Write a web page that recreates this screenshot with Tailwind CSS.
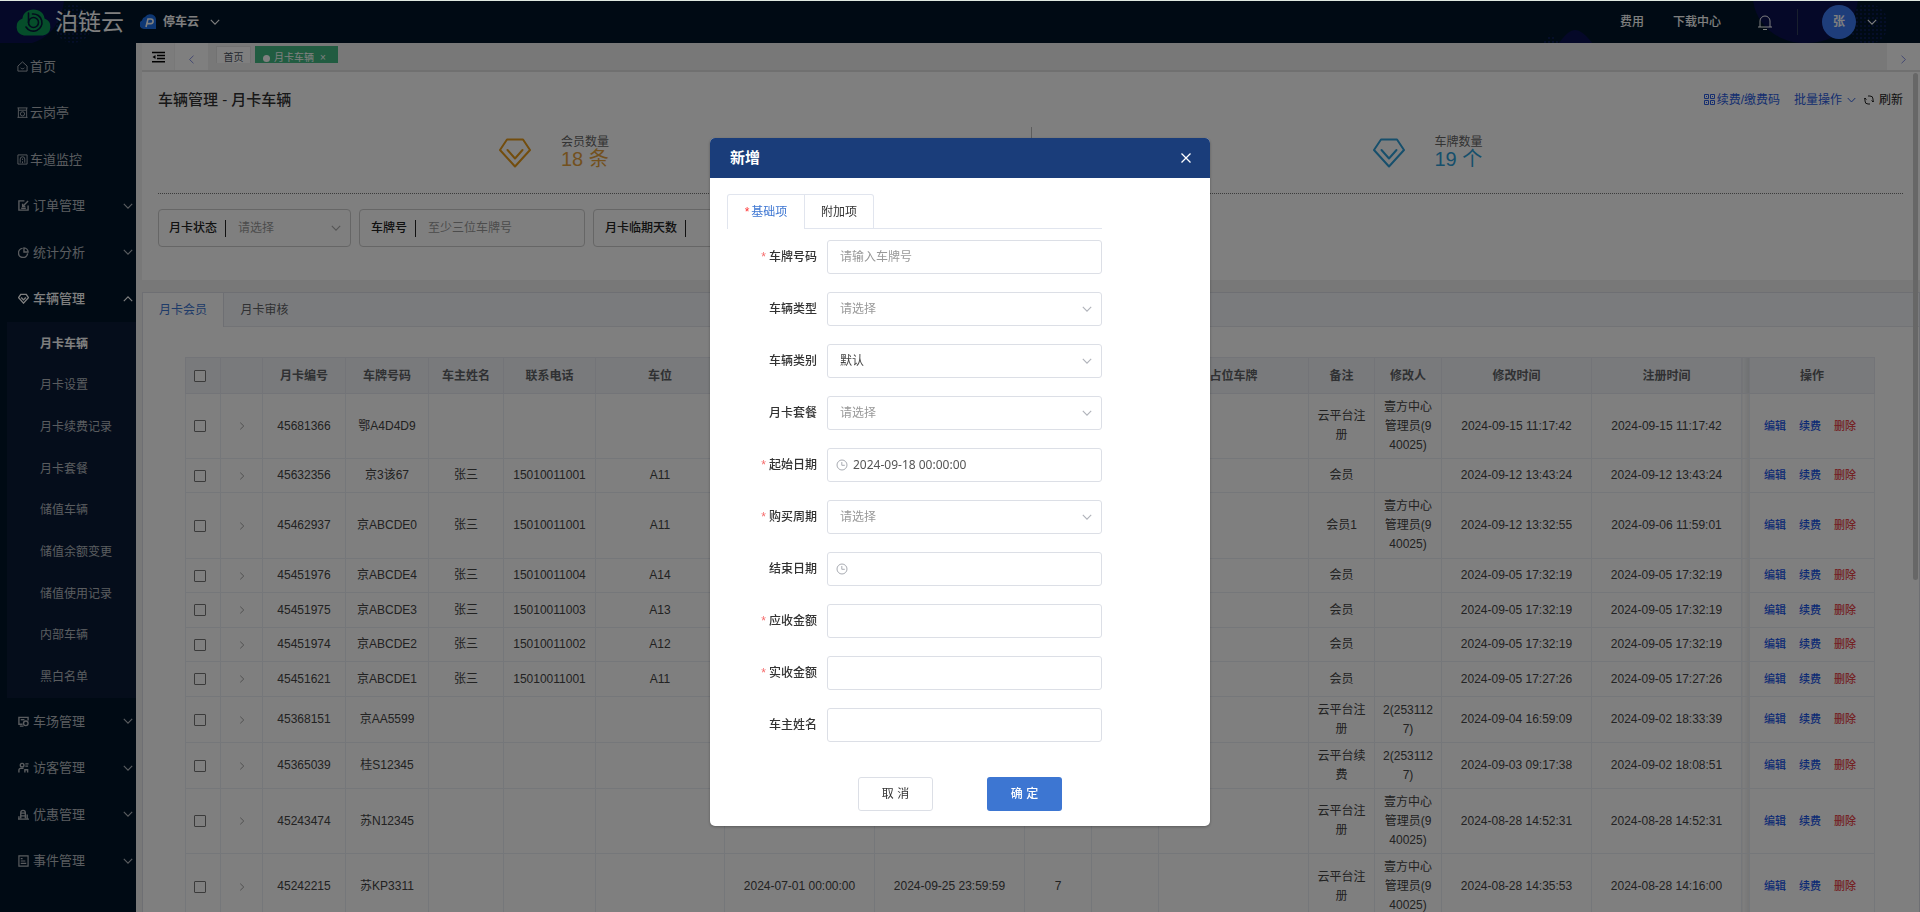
<!DOCTYPE html>
<html lang="zh-CN">
<head>
<meta charset="utf-8">
<title>泊链云 - 月卡车辆</title>
<script src="https://cdn.jsdelivr.net/npm/@tailwindcss/browser@4"></script>
</head>
<body class="bg-[#dfe8e0] font-['Liberation_Sans','Noto_Sans_CJK_SC',sans-serif] text-xs text-[#444]">
<svg class="hidden">
  <symbol id="down" viewBox="0 0 10 10"><path d="M.8 2.800 5 7.200l4.200-4.400" fill="none" stroke="currentColor" stroke-width="1.100"/></symbol>
  <symbol id="up" viewBox="0 0 10 10"><path d="M.8 7.200 5 2.800l4.200 4.400" fill="none" stroke="currentColor" stroke-width="1.100"/></symbol>
  <symbol id="right" viewBox="0 0 10 10"><path d="M2.800.8 7.200 5l-4.400 4.200" fill="none" stroke="currentColor"/></symbol>
  <symbol id="left" viewBox="0 0 10 10"><path d="M7.200.8 2.800 5l4.400 4.200" fill="none" stroke="currentColor"/></symbol>
  <symbol id="clock" viewBox="0 0 12 12"><g fill="none" stroke="currentColor"><circle cx="6" cy="6" r="5"/><path d="M5.800 3v3.300h3"/></g></symbol>
  <symbol id="diamond" viewBox="0 0 32 30"><g fill="none" stroke="currentColor" stroke-width="2" stroke-linejoin="round" stroke-linecap="round"><path d="M8 1.500h16L31 12 16 28.500 1 12z"/><path d="M8.500 12 16 20.500 23.500 12"/></g></symbol>
</svg>

<div class="flex h-screen flex-col overflow-hidden pt-px">
  <header class="relative flex h-[42px] shrink-0 items-center overflow-hidden bg-[#001529] text-white">
    <svg class="absolute top-0 left-0 h-[42px] w-[140px]" viewBox="0 0 140 42">
      <defs><pattern id="dots" width="4" height="4" patternUnits="userSpaceOnUse"><rect width="2" height="2" fill="#0a1c50"/></pattern></defs>
      <path d="M0 0h64C62 18 52 36 32 42H0z" fill="#0a1050"/><circle cx="73" cy="23" r="19" fill="url(#dots)"/>
    </svg>
    <svg class="absolute top-0 right-0 h-[42px] w-[400px]" viewBox="0 0 400 42">
      <path d="M233-1c3 25 24 43 53 43s49-18 52-43z" fill="#0a1050"/><path d="M38 43c8-10 12-14 17-14s10 4 18 14z" fill="#0a1050"/>
      <path d="M22 43l9-11 9 11z" fill="url(#dots)"/><circle cx="348" cy="23" r="20" fill="url(#dots)"/>
    </svg>
    <a href="#" class="relative ml-[15px] flex items-center gap-[3px]">
      <svg class="h-[27px] w-[37px]" viewBox="0 0 37 27">
        <path d="M9 26.500A8.800 8.800 0 0 1 7.500 9.500C8 4 12.500.5 18.500.5S29 4 29.500 9.500A8.800 8.800 0 0 1 28 26.500z" fill="#0a9a55"/>
        <g fill="none" stroke="#06173a" stroke-width="1.600" stroke-linecap="round"><path d="M13.500 4v9.500"/><circle cx="18.500" cy="13.500" r="5"/><path d="M17.500 5a8.600 8.600 0 1 1-6.500 13"/></g>
      </svg>
      <span class="text-[23px] leading-8">泊链云</span>
    </a>
    <button class="relative ml-4 flex items-center gap-[7px] font-bold">
      <svg class="h-4 w-4" viewBox="0 0 16 16"><path d="M5 3a6 6 0 0 1 11 4v8H4A4.500 4.500 0 0 1 2 6.500C2.500 4.500 3.500 3.300 5 3z" fill="#1a6fe8"/><path d="M6 13 8 5h2.800a2.200 2.200 0 0 1 0 4.600H7.500" fill="none" stroke="#fff" stroke-width="1.600"/></svg>
      停车云
      <svg class="ml-1 h-[10px] w-[10px]"><use href="#down"/></svg>
    </button>
    <nav class="relative ml-auto flex items-center">
      <a href="#" class="font-medium">费用</a>
      <a href="#" class="ml-[29px] font-medium">下载中心</a>
      <button aria-label="通知" class="ml-[36px]"><svg class="h-4 w-4" viewBox="0 0 16 16" fill="none" stroke="#fff"><path d="M1 13h14M3 13V7a5 5 0 0 1 10 0v6M6 15.500h4"/></svg></button>
      <span class="ml-[24px] h-[26px] w-px bg-[#33415c]"></span>
      <span class="ml-[24px] flex h-[34px] w-[34px] items-center justify-center rounded-full bg-[#3d7bf5] font-bold">张</span>
      <button aria-label="账户" class="mr-[43px] ml-[11px]"><svg class="h-[10px] w-[10px]"><use href="#down"/></svg></button>
    </nav>
  </header>

  <div class="flex min-h-0 flex-1">
    <aside class="w-[136px] shrink-0 overflow-hidden bg-[#001529] text-[13px] text-[#b4b9bf]">
      <nav class="grid h-[279px] auto-rows-fr">
        <a href="#" class="flex items-center gap-[2px] pl-[17px]"><svg class="h-[11px] w-[11px]" viewBox="0 0 12 12" fill="none" stroke="currentColor"><path d="M1 5.500 6 1l5 4.500V11H1zM4 7.500c1 1.300 3 1.300 4 0"/></svg>首页</a>
        <a href="#" class="flex items-center gap-[2px] pl-[17px]"><svg class="h-[11px] w-[11px]" viewBox="0 0 12 12" fill="none" stroke="currentColor"><path d="M.5 1h11M1.500 1v10.500M10.500 1v10.500M.5 11.300h11M2 3.500h8"/><circle cx="6" cy="7.500" r="2.300"/></svg>云岗亭</a>
        <a href="#" class="flex items-center gap-[2px] pl-[17px]"><svg class="h-[11px] w-[11px]" viewBox="0 0 12 12" fill="none" stroke="currentColor"><path d="M1 1h10v10H1zM3.500 9.500V5.500a2.500 2.500 0 0 1 5 0v4M6 5v1.500M6 8v2"/></svg>车道监控</a>
        <a href="#" class="flex items-center gap-1 pr-[3px] pl-[18px]"><svg class="h-[11px] w-[11px]" viewBox="0 0 12 12" fill="none" stroke="currentColor" stroke-width="1.500"><path d="M7 1H1v10h10V6M5 7l6-6M3.500 9h5M5 4v3h3"/></svg>订单管理<svg class="ml-auto h-[10px] w-[10px]"><use href="#down"/></svg></a>
        <a href="#" class="flex items-center gap-1 pr-[3px] pl-[18px]"><svg class="h-[11px] w-[11px]" viewBox="0 0 12 12" fill="none" stroke="currentColor" stroke-width="1.500"><path d="M5 1.500A5 5 0 1 0 10.500 7M6.500 1v4.500H11A4.600 4.600 0 0 0 6.500 1z"/></svg>统计分析<svg class="ml-auto h-[10px] w-[10px]"><use href="#down"/></svg></a>
        <a href="#" class="flex items-center gap-1 pr-[3px] pl-[18px] font-medium text-white"><svg class="h-[11px] w-[11px]" viewBox="0 0 12 12" fill="none" stroke="currentColor" stroke-width="1.500"><path d="M3 1.500h6L11.300 5 6 11 .7 5zM3.500 5 6 7.500 8.500 5"/></svg>车辆管理<svg class="ml-auto h-[10px] w-[10px]"><use href="#up"/></svg></a>
      </nav>
      <nav class="ml-[7px] grid h-[376px] auto-rows-fr items-center bg-[#0a1a36] pt-px pl-[33px] text-xs">
        <a href="#" class="font-bold text-white">月卡车辆</a><a href="#">月卡设置</a><a href="#">月卡续费记录</a><a href="#">月卡套餐</a><a href="#">储值车辆</a><a href="#">储值余额变更</a><a href="#">储值使用记录</a><a href="#">内部车辆</a><a href="#">黑白名单</a>
      </nav>
      <nav class="grid h-[186px] auto-rows-fr">
        <a href="#" class="flex items-center gap-1 pr-[3px] pl-[18px]"><svg class="h-[11px] w-[11px]" viewBox="0 0 12 12" fill="none" stroke="currentColor" stroke-width="1.500"><path d="M5 9H1V1.500h10V5M2 11h4"/><circle cx="8.500" cy="8" r="2.500"/><path d="M3 4h4"/></svg>车场管理<svg class="ml-auto h-[10px] w-[10px]"><use href="#down"/></svg></a>
        <a href="#" class="flex items-center gap-1 pr-[3px] pl-[18px]"><svg class="h-[11px] w-[11px]" viewBox="0 0 12 12" fill="none" stroke="currentColor" stroke-width="1.500"><circle cx="4.500" cy="3.500" r="2"/><path d="M1 11.500V9a2 2 0 0 1 2-2h3M8 2h3.500M8 4.500h3M7.500 11.500V8.500h3v3"/></svg>访客管理<svg class="ml-auto h-[10px] w-[10px]"><use href="#down"/></svg></a>
        <a href="#" class="flex items-center gap-1 pr-[3px] pl-[18px]"><svg class="h-[11px] w-[11px]" viewBox="0 0 12 12" fill="none" stroke="currentColor" stroke-width="1.500"><path d="M3 10V4a2.500 2.500 0 0 1 5 0v6M0 11h12M3 4.500h5M3 7.500h5M10 6v5M1 8v3"/></svg>优惠管理<svg class="ml-auto h-[10px] w-[10px]"><use href="#down"/></svg></a>
        <a href="#" class="flex items-center gap-1 pr-[3px] pl-[18px]"><svg class="h-3 w-[11px]" viewBox="0 0 12 13" fill="none" stroke="currentColor" stroke-width="1.300"><path d="M1 1h10v11H1zM3 4h2M3 6.500h5M3 9h6"/></svg>事件管理<svg class="ml-auto h-[10px] w-[10px]"><use href="#down"/></svg></a>
      </nav>
    </aside>

    <main class="relative flex min-w-0 flex-1 flex-col overflow-hidden bg-[#f0f0f0] pl-[6px]">
      <div class="flex h-[29px] shrink-0 items-stretch border-b-2 border-[#e0e0e0]">
        <button aria-label="折叠菜单" class="flex w-8 items-center justify-center bg-[#f8f8f8]"><svg class="h-3 w-[13px]" viewBox="0 0 13 12" fill="none" stroke="#000" stroke-width="1.600"><path d="M0 1.500h13M5 4.500h8M5 7.500h8M0 10.800h13"/><path d="M3.500 4v4L.5 6z" fill="#000" stroke="none"/></svg></button>
        <button aria-label="向左" class="ml-px flex w-[33px] items-center justify-center bg-white pt-[6px] text-[#7a86e0]"><svg class="h-[9px] w-[9px]"><use href="#left"/></svg></button>
        <div class="ml-2 flex h-5 items-start gap-1 overflow-hidden pt-[3px] text-[10px]">
          <a href="#" class="flex h-6 w-[35px] shrink-0 items-center justify-center border border-[#e4e4e4] bg-white text-[#495060]">首页</a>
          <a href="#" class="flex h-6 w-[83px] shrink-0 items-center bg-[#42b983] pl-2 text-white"><span class="mr-1 h-[7px] w-[7px] rounded-full bg-white"></span>月卡车辆<span class="ml-[6px]">×</span></a>
        </div>
        <button aria-label="向右" class="ml-auto flex w-[33px] items-center justify-center bg-white pt-[6px] text-[#7a86e0]"><svg class="h-[9px] w-[9px]"><use href="#right"/></svg></button>
      </div>

      <section class="shrink-0 bg-white pr-[17px] pb-[33px] pl-4">
        <div class="flex h-[55px] items-center">
          <h1 class="text-[15px] font-medium text-[#303030]">车辆管理 - 月卡车辆</h1>
          <a href="#" class="ml-auto flex items-center gap-[2px] text-[#2a5ce0]"><svg class="h-[11px] w-[11px]" viewBox="0 0 11 11" fill="none" stroke="currentColor"><path d="M.5.500h4v4h-4zM6.500.5h4v4h-4zM.5 6.500h4v4h-4zM6.500 6.500h4v4h-4zM2 2.500h1M8 2.500h1M2 8.500h1M8 8.500h1"/></svg>续费/缴费码</a>
          <button class="ml-[14px] flex items-center gap-[5px] text-[#2a5ce0]">批量操作<svg class="h-[10px] w-[9px]"><use href="#down"/></svg></button>
          <button class="ml-2 flex items-center gap-[5px] text-[#222]"><svg class="h-[10px] w-[10px]" viewBox="0 0 10 10" fill="none" stroke="currentColor"><path d="M1 3.500V6a3 3 0 0 0 3 3h2M9 6.500V4a3 3 0 0 0-3-3H4M0 4.500 1 3l1.500 1.500M7.500 5.500 9 7l1-1.500"/></svg>刷新</button>
        </div>
        <div class="grid h-[67px] grid-cols-2 border-b border-dotted border-[#777]">
          <div class="flex items-start gap-[30px] pt-2 pl-[341px]">
            <svg class="mt-[3px] h-[30px] w-8 text-[#e69a1a]"><use href="#diamond"/></svg>
            <div><p class="leading-[14px] text-[#666]">会员数量</p><p class="text-xl leading-5 text-[#e6a23c]">18 条</p></div>
          </div>
          <div class="flex items-start gap-[30px] border-l border-[#bbb] pt-2 pl-[341px]">
            <svg class="mt-[3px] h-[30px] w-8 text-[#2e9fd8]"><use href="#diamond"/></svg>
            <div><p class="leading-[14px] text-[#666]">车牌数量</p><p class="text-xl leading-5 text-[#2e9fd8]">19 个</p></div>
          </div>
        </div>
        <div class="mt-[15px] flex gap-2">
          <label class="flex h-[38px] w-[193px] items-center rounded border border-[#ccc] pl-[10px] font-medium text-[#222]">月卡状态<span class="mx-2 h-[17px] w-px bg-[#222]"></span>
            <select class="min-w-0 flex-1 appearance-none bg-transparent pl-1 font-normal text-[#999]"><option>请选择</option></select><svg class="mr-[9px] h-[10px] w-[10px] text-[#aaa]"><use href="#down"/></svg></label>
          <label class="flex h-[38px] w-[226px] items-center rounded border border-[#ccc] pl-[11px] font-medium text-[#222]">车牌号<span class="mx-2 h-[17px] w-px bg-[#222]"></span>
            <input type="text" placeholder="至少三位车牌号" class="min-w-0 flex-1 bg-transparent pl-1 font-normal placeholder:text-[#999]"></label>
          <label class="flex h-[38px] w-[226px] items-center rounded border border-[#ccc] pl-[11px] font-medium text-[#222]">月卡临期天数<span class="mx-2 h-[17px] w-px bg-[#222]"></span>
            <input type="text" class="min-w-0 flex-1 bg-transparent pl-1 font-normal"></label>
        </div>
      </section>

      <section class="mt-3 shrink-0 border border-[#dcdfe6] bg-white">
        <div class="flex h-[34px] bg-[#f5f7fa] text-[#606266]" role="tablist">
          <button role="tab" class="w-[81px] border-r border-[#dcdfe6] bg-white text-[#3d76d2]">月卡会员</button>
          <button role="tab" class="w-[81px] border-b border-[#e4e7ed]">月卡审核</button>
          <span class="flex-1 border-b border-[#e4e7ed]"></span>
        </div>
        <div class="pt-[30px] pr-[44px] pl-[42px]">
          <table class="w-full table-fixed border-collapse text-center">
            <colgroup><col class="w-[35px]"><col class="w-[42px]"><col class="w-[83px]"><col class="w-[83px]"><col class="w-[75px]"><col class="w-[92px]"><col class="w-[129px]"><col class="w-[150px]"><col class="w-[150px]"><col class="w-[67px]"><col class="w-[67px]"><col class="w-[150px]"><col class="w-[66px]"><col class="w-[67px]"><col class="w-[150px]"><col class="w-[150px]"><col class="w-[8px]"><col></colgroup>
            <thead><tr class="h-[36px] bg-[#f2f5f8] text-[#606266] *:border *:border-[#e6e9f0] *:font-semibold">
              <th><input type="checkbox" aria-label="全选" class="ml-2 block h-3 w-3 appearance-none rounded-[1px] border border-[#777] bg-white"></th><th></th><th>月卡编号</th><th>车牌号码</th><th>车主姓名</th><th>联系电话</th><th>车位</th><th>开始时间</th><th>结束时间</th><th>天数</th><th>状态</th><th>占位车牌</th><th>备注</th><th>修改人</th><th>修改时间</th><th>注册时间</th><th class="bg-linear-to-r from-transparent to-black/8"></th><th>操作</th>
            </tr></thead>
            <tbody id="rows"></tbody>
          </table>
        </div>
      </section>
      <div class="absolute top-[30px] right-[2px] h-[507px] w-[5px] rounded-full bg-[#cfcfcf]"></div>
    </main>
  </div>
</div>

<div class="fixed inset-x-0 top-px bottom-0 flex items-start justify-center bg-black/50">
  <form role="dialog" aria-label="新增" class="mt-[137px] w-[500px] overflow-hidden rounded-[5px] bg-white text-[#333] shadow-[0_1px_3px_rgba(0,0,0,0.3)]">
    <div class="flex h-10 items-center justify-between bg-[#1a3d7a] pr-[19px] pl-5 text-white">
      <h2 class="text-[15px] font-bold">新增</h2>
      <button type="button" aria-label="关闭"><svg class="h-[10px] w-[10px]" viewBox="0 0 10 10" stroke="#fff" stroke-width="1.300"><path d="M.5.500l9 9M9.500.5l-9 9"/></svg></button>
    </div>
    <div class="mt-4 mr-[108px] ml-[17px] flex h-[35px]" role="tablist">
      <button type="button" role="tab" class="w-[78px] rounded-tl-[3px] border-t border-r border-l border-[#e1e5ee] text-[#3d76d2]"><span class="mr-[2px] text-[#f33]">*</span>基础项</button>
      <button type="button" role="tab" class="w-[69px] rounded-tr-[3px] border-t border-r border-b border-[#e1e5ee]">附加项</button>
      <span class="flex-1 border-b border-[#e1e5ee]"></span>
    </div>
    <div id="fields" class="mt-[11px] mr-[108px] grid grid-cols-[107px_1fr] items-center gap-x-[10px] gap-y-[18px]"></div>
    <div class="flex justify-center gap-[54px] pt-[35px] pb-[15px]">
      <button type="button" class="h-[34px] w-[75px] rounded-[3px] border border-[#dcdfe6]">取 消</button>
      <button type="submit" class="h-[34px] w-[75px] rounded-[3px] bg-[#3d76d2] font-medium text-white">确 定</button>
    </div>
  </form>
</div>

<script>
const mgr = '壹方中心管理员(940025)';
// height class, id, plate, owner, phone, space, remark, modifier, modified, registered, start, end, days
const rows = [
  ['h-[65px]','45681366','鄂A4D4D9','','','','云平台注册',mgr,'2024-09-15 11:17:42','2024-09-15 11:17:42'],
  ['h-[34px]','45632356','京3该67','张三','15010011001','A11','会员','','2024-09-12 13:43:24','2024-09-12 13:43:24'],
  ['h-[66px]','45462937','京ABCDE0','张三','15010011001','A11','会员1',mgr,'2024-09-12 13:32:55','2024-09-06 11:59:01'],
  ['h-[34px]','45451976','京ABCDE4','张三','15010011004','A14','会员','','2024-09-05 17:32:19','2024-09-05 17:32:19'],
  ['h-[35px]','45451975','京ABCDE3','张三','15010011003','A13','会员','','2024-09-05 17:32:19','2024-09-05 17:32:19'],
  ['h-[34px]','45451974','京ABCDE2','张三','15010011002','A12','会员','','2024-09-05 17:32:19','2024-09-05 17:32:19'],
  ['h-[35px]','45451621','京ABCDE1','张三','15010011001','A11','会员','','2024-09-05 17:27:26','2024-09-05 17:27:26'],
  ['h-[46px]','45368151','京AA5599','','','','云平台注册','2(2531127)','2024-09-04 16:59:09','2024-09-02 18:33:39'],
  ['h-[46px]','45365039','桂S12345','','','','云平台续费','2(2531127)','2024-09-03 09:17:38','2024-09-02 18:08:51'],
  ['h-[65px]','45243474','苏N12345','','','','云平台注册',mgr,'2024-08-28 14:52:31','2024-08-28 14:52:31'],
  ['h-[66px]','45242215','苏KP3311','','','','云平台注册',mgr,'2024-08-28 14:35:53','2024-08-28 14:16:00','2024-07-01 00:00:00','2024-09-25 23:59:59','7'],
];
document.getElementById('rows').innerHTML = rows.map(([h,id,plate,owner,phone,space,remark,by,mod,reg,start='',end='',days='']) => `
<tr class="${h} leading-[19px] *:border *:border-[#ebeef5]">
  <td><input type="checkbox" aria-label="选择 ${id}" class="ml-2 block h-3 w-3 appearance-none rounded-[1px] border border-[#777] bg-white"></td>
  <td><button aria-label="展开" class="align-middle text-[#888]"><svg class="h-2 w-2"><use href="#right"/></svg></button></td>
  <td>${id}</td><td>${plate}</td><td>${owner}</td><td>${phone}</td><td>${space}</td>
  <td>${start}</td><td>${end}</td><td>${days}</td><td></td><td></td>
  <td class="px-2">${remark}</td><td class="px-2 break-all">${by}</td><td>${mod}</td><td>${reg}</td><td class="bg-linear-to-r from-transparent to-black/8"></td>
  <td><div class="flex justify-center gap-[13px] pr-1 text-[11px] font-medium text-[#1a56e8]"><a href="#">编辑</a><a href="#">续费</a><a href="#" class="text-[#e8464a]">删除</a></div></td>
</tr>`).join('');

// label, kind, text, required
const fields = [
  ['车牌号码','text','请输入车牌号',true],['车辆类型','select','请选择',false],['车辆类别','select','默认',false],
  ['月卡套餐','select','请选择',false],['起始日期','date','2024-09-18 00:00:00',true],['购买周期','select','请选择',true],
  ['结束日期','date','',false],['应收金额','text','',true],['实收金额','text','',true],['车主姓名','text','',false],
];
document.getElementById('fields').innerHTML = fields.map(([label,kind,text,req],i) => {
  const mark = req ? '<span class="mr-[3px] font-normal text-[#f56c6c]">*</span>' : '';
  const box = 'flex h-[34px] items-center rounded-[3px] border border-[#dcdfe6] bg-white';
  let control;
  if (kind === 'select') control = `<select id="f${i}" class="min-w-0 flex-1 appearance-none bg-transparent pl-3 ${text === '默认' ? 'text-[#444]' : 'text-[#999]'}"><option>${text}</option></select><svg class="mr-[9px] h-[10px] w-[10px] text-[#b0b3ba]"><use href="#down"/></svg>`;
  else if (kind === 'date') control = `<svg class="ml-2 h-3 w-3 text-[#a8abb2]"><use href="#clock"/></svg><input id="f${i}" type="text" value="${text}" class="ml-[5px] min-w-0 flex-1 bg-transparent font-['Noto_Sans',sans-serif] text-[#555]">`;
  else control = `<input id="f${i}" type="text" placeholder="${text}" class="min-w-0 flex-1 bg-transparent pl-3 placeholder:text-[#999]">`;
  return `<label for="f${i}" class="text-right font-medium">${mark}${label}</label><div class="${box}">${control}</div>`;
}).join('');
</script>
</body>
</html>
